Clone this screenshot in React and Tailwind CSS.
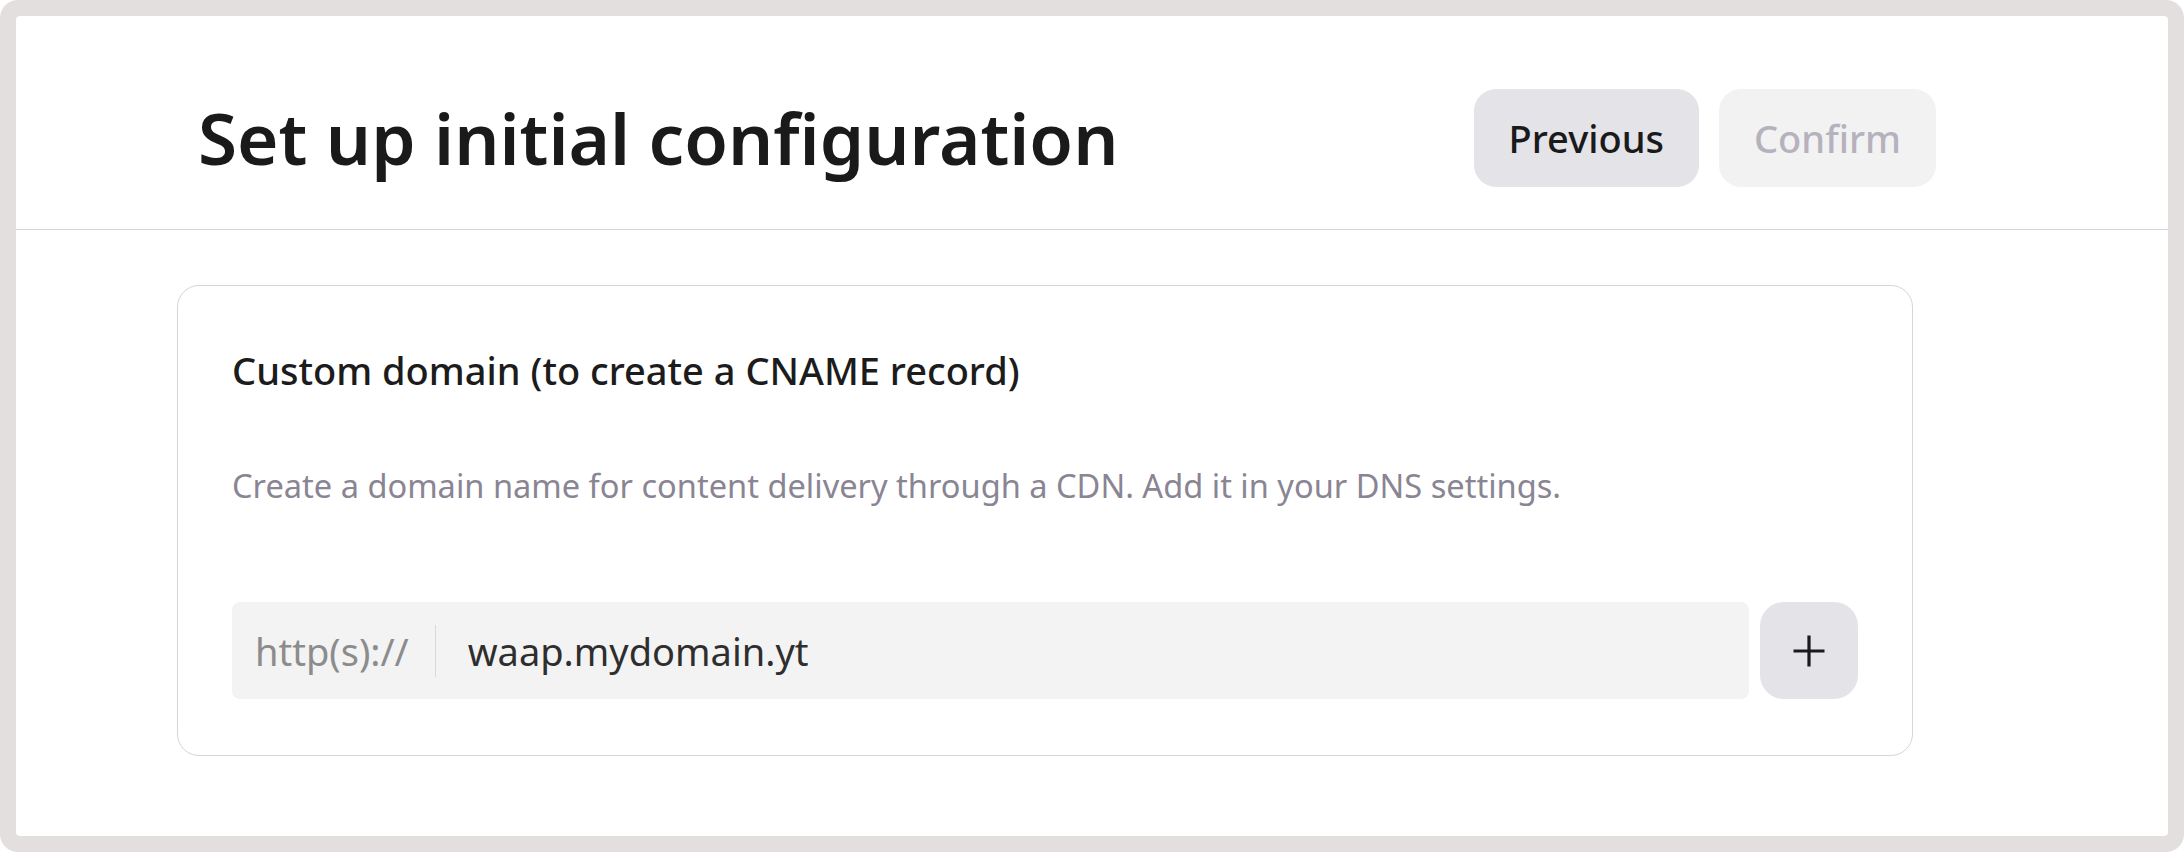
import React from "react";

export default function App() {
  return (
    <div className="w-[2184px] h-[852px] bg-white" style={{ fontFamily: '"Noto Sans", "Open Sans", sans-serif' }}>
      <div className="w-full h-full bg-[#e3dfde] rounded-[18px] p-4">
        <div className="w-full h-full bg-white rounded-[4px] flex flex-col">
          <div className="flex items-center justify-between pl-[182px] pr-[232px] pt-[73px] pb-[42px] border-b border-[#d6d4dc]">
            <h1 className="text-[71px] leading-[98px] font-semibold text-[#1a1a1a]">Set up initial configuration</h1>
            <div className="flex items-center gap-[20px]">
              <button className="h-[98px] px-[35px] rounded-[22px] bg-[#e4e3e8] text-[38px] leading-[52px] font-medium text-[#1a1a1a]">Previous</button>
              <button className="h-[98px] px-[35px] rounded-[22px] bg-[#f2f2f3] text-[38px] leading-[52px] font-medium text-[#b6b2bd]">Confirm</button>
            </div>
          </div>
          <div className="pl-[161px] pt-[55px]">
            <div className="w-[1736px] border border-[#d6d4dc] rounded-[22px] pl-[54px] pr-[54px] pt-[58px] pb-[56px]">
              <div className="text-[38px] leading-[52px] font-medium text-[#1c1c1c]">Custom domain (to create a CNAME record)</div>
              <div className="mt-[68px] text-[32.6px] leading-[44px] text-[#8a8593]">Create a domain name for content delivery through a CDN. Add it in your DNS settings.</div>
              <div className="mt-[94px] flex items-center gap-[11px]">
                <div className="flex-1 h-[97px] bg-[#f3f3f3] rounded-[8px] pl-[23px] flex items-center">
                  <span className="text-[38px] leading-[52px] text-[#8c8c8c]">http(s)://</span>
                  <span className="w-px h-[52px] bg-[#d9d9d9] ml-[26px] mr-[32px]"></span>
                  <span className="text-[38px] leading-[52px] text-[#2e2e2e]">waap.mydomain.yt</span>
                </div>
                <button className="w-[98px] h-[97px] rounded-[24px] bg-[#e4e3e8] flex items-center justify-center">
                  <svg width="34" height="34" viewBox="0 0 34 34" fill="none">
                    <path d="M17 1.5V32.5M1.5 17H32.5" stroke="#1a1a1a" strokeWidth="3.2" />
                  </svg>
                </button>
              </div>
            </div>
          </div>
        </div>
      </div>
    </div>
  );
}
